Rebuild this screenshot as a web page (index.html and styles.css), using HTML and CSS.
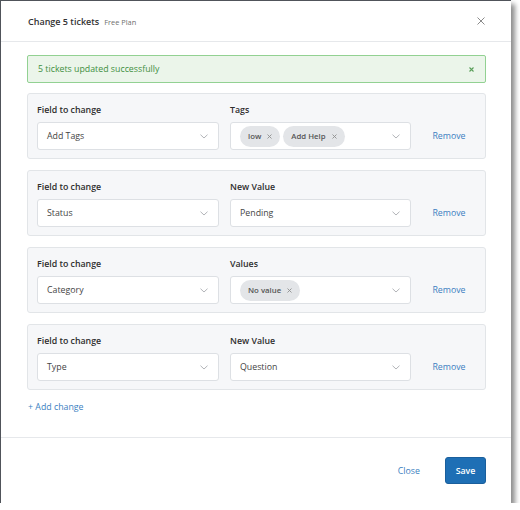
FILE: index.html
```html
<!DOCTYPE html>
<html lang="en">
<head>
    <meta charset="UTF-8">
    <meta name="viewport" content="width=device-width, initial-scale=1.0">
    <title>Change 5 tickets</title>
    <link rel="stylesheet" href="styles.css">
</head>
<body>
    <div class="modal">
        <div class="modal-header">
            <span class="title">Change 5 tickets</span>
            <span class="plan">Free Plan</span>
            <span class="close-x">
                <svg width="8" height="8" viewBox="0 0 8 8"><path d="M0.5 0.5L7.5 7.5M7.5 0.5L0.5 7.5" stroke="#8a8a8a" stroke-width="1"/></svg>
            </span>
        </div>

        <div class="modal-body">
            <div class="alert">
                <span>5 tickets updated successfully</span>
                <svg width="5" height="5" viewBox="0 0 5 5"><path d="M0.5 0.5L4.5 4.5M4.5 0.5L0.5 4.5" stroke="#5a9f5a" stroke-width="1.1"/></svg>
            </div>

            <div class="change-row">
                <div class="field">
                    <div class="label">Field to change</div>
                    <div class="select"><span class="value">Add Tags</span><svg class="chevron" width="8" height="5" viewBox="0 0 8 5"><path d="M0.5 0.7L4 4L7.5 0.7" fill="none" stroke="#a9acb0" stroke-width="0.9"/></svg></div>
                </div>
                <div class="field">
                    <div class="label">Tags</div>
                    <div class="select">
                        <span class="pills">
                            <span class="pill">low <svg width="5" height="5" viewBox="0 0 5 5"><path d="M0.5 0.5L4.5 4.5M4.5 0.5L0.5 4.5" stroke="#8e8e8e" stroke-width="0.9"/></svg></span>
                            <span class="pill">Add Help <svg width="5" height="5" viewBox="0 0 5 5"><path d="M0.5 0.5L4.5 4.5M4.5 0.5L0.5 4.5" stroke="#8e8e8e" stroke-width="0.9"/></svg></span>
                        </span>
                        <svg class="chevron" width="8" height="5" viewBox="0 0 8 5"><path d="M0.5 0.7L4 4L7.5 0.7" fill="none" stroke="#a9acb0" stroke-width="0.9"/></svg>
                    </div>
                </div>
                <a class="remove" href="#">Remove</a>
            </div>

            <div class="change-row">
                <div class="field">
                    <div class="label">Field to change</div>
                    <div class="select"><span class="value">Status</span><svg class="chevron" width="8" height="5" viewBox="0 0 8 5"><path d="M0.5 0.7L4 4L7.5 0.7" fill="none" stroke="#a9acb0" stroke-width="0.9"/></svg></div>
                </div>
                <div class="field">
                    <div class="label">New Value</div>
                    <div class="select"><span class="value">Pending</span><svg class="chevron" width="8" height="5" viewBox="0 0 8 5"><path d="M0.5 0.7L4 4L7.5 0.7" fill="none" stroke="#a9acb0" stroke-width="0.9"/></svg></div>
                </div>
                <a class="remove" href="#">Remove</a>
            </div>

            <div class="change-row">
                <div class="field">
                    <div class="label">Field to change</div>
                    <div class="select"><span class="value">Category</span><svg class="chevron" width="8" height="5" viewBox="0 0 8 5"><path d="M0.5 0.7L4 4L7.5 0.7" fill="none" stroke="#a9acb0" stroke-width="0.9"/></svg></div>
                </div>
                <div class="field">
                    <div class="label">Values</div>
                    <div class="select">
                        <span class="pills">
                            <span class="pill">No value <svg width="5" height="5" viewBox="0 0 5 5"><path d="M0.5 0.5L4.5 4.5M4.5 0.5L0.5 4.5" stroke="#8e8e8e" stroke-width="0.9"/></svg></span>
                        </span>
                        <svg class="chevron" width="8" height="5" viewBox="0 0 8 5"><path d="M0.5 0.7L4 4L7.5 0.7" fill="none" stroke="#a9acb0" stroke-width="0.9"/></svg>
                    </div>
                </div>
                <a class="remove" href="#">Remove</a>
            </div>

            <div class="change-row">
                <div class="field">
                    <div class="label">Field to change</div>
                    <div class="select"><span class="value">Type</span><svg class="chevron" width="8" height="5" viewBox="0 0 8 5"><path d="M0.5 0.7L4 4L7.5 0.7" fill="none" stroke="#a9acb0" stroke-width="0.9"/></svg></div>
                </div>
                <div class="field">
                    <div class="label">New Value</div>
                    <div class="select"><span class="value">Question</span><svg class="chevron" width="8" height="5" viewBox="0 0 8 5"><path d="M0.5 0.7L4 4L7.5 0.7" fill="none" stroke="#a9acb0" stroke-width="0.9"/></svg></div>
                </div>
                <a class="remove" href="#">Remove</a>
            </div>

            <a class="add-change" href="#">+ Add change</a>
        </div>

        <div class="modal-footer">
            <a class="close-link" href="#">Close</a>
            <button class="save">Save</button>
        </div>
    </div>
</body>
</html>
```

FILE: styles.css
```css
body {
    margin: 0;
    background: #ffffff;
    font-family: "Open Sans", "Noto Sans", sans-serif;
    font-size: 8.8px;
    color: #333;
}
.modal {
    width: 510px;
    height: 502px;
    border-left: 1px solid #50545a;
    border-top: 1px solid #50545a;
    background: #fff;
    box-shadow: 4px 4px 5px rgba(0, 0, 0, 0.45);
    display: flex;
    flex-direction: column;
}
.modal-header {
    height: 40px;
    border-bottom: 1px solid #e6e8eb;
    display: flex;
    align-items: center;
    padding: 0 26px 0 27px;
}
.title {
    font-size: 9px;
    font-weight: 600;
    color: #333;
}
.plan {
    font-size: 7.4px;
    color: #6f6f6f;
    margin-left: 5px;
    margin-top: 1px;
}
.close-x {
    margin-left: auto;
    display: flex;
}
.modal-body {
    flex: 1;
    padding: 13px 25px 0 26px;
}
.alert {
    height: 26px;
    border: 1px solid #92d192;
    border-radius: 2px;
    background: #ebf5ea;
    color: #3f8f3f;
    display: flex;
    align-items: center;
    justify-content: space-between;
    padding: 0 11px 0 10px;
    margin-bottom: 10px;
}
.change-row {
    background: #f6f7f9;
    border: 1px solid #e2e5e8;
    border-radius: 3px;
    padding: 9px 9px 8px 9px;
    display: grid;
    grid-template-columns: 182px 181px 1fr;
    column-gap: 11px;
    margin-bottom: 11px;
}
.label {
    font-weight: 600;
    color: #2e2e2e;
    line-height: 14px;
    margin-bottom: 5px;
}
.select {
    height: 26px;
    background: #fff;
    border: 1px solid #dde0e4;
    border-radius: 3px;
    display: flex;
    align-items: center;
    padding: 0 10px 0 9px;
}
.value {
    color: #444;
    flex: 1;
}
.chevron {
    display: block;
}
.pills {
    flex: 1;
    display: flex;
    gap: 3px;
}
.pill {
    background: #e3e5e8;
    border-radius: 11px;
    height: 21px;
    padding: 0 8px;
    font-size: 7.8px;
    font-weight: 600;
    color: #555;
    display: flex;
    align-items: center;
    gap: 6px;
}
.remove {
    align-self: end;
    line-height: 28px;
    text-align: center;
    color: #3c7fc1;
    text-decoration: none;
}
.add-change {
    display: block;
    margin-top: -1px;
    line-height: 14px;
    color: #3c7fc1;
    text-decoration: none;
    margin-left: 1px;
}
.modal-footer {
    height: 65px;
    border-top: 1px solid #e6e8eb;
    display: flex;
    align-items: center;
    justify-content: flex-end;
    padding: 0 25px;
    gap: 25px;
}
.close-link {
    color: #3c7fc1;
    text-decoration: none;
}
.save {
    width: 41px;
    height: 27px;
    background: #1e6fb5;
    border: 1px solid #1a5f9c;
    border-radius: 3px;
    color: #fff;
    font-family: "Open Sans", "Noto Sans", sans-serif;
    font-size: 8.8px;
    font-weight: 600;
    padding: 0;
}
```
